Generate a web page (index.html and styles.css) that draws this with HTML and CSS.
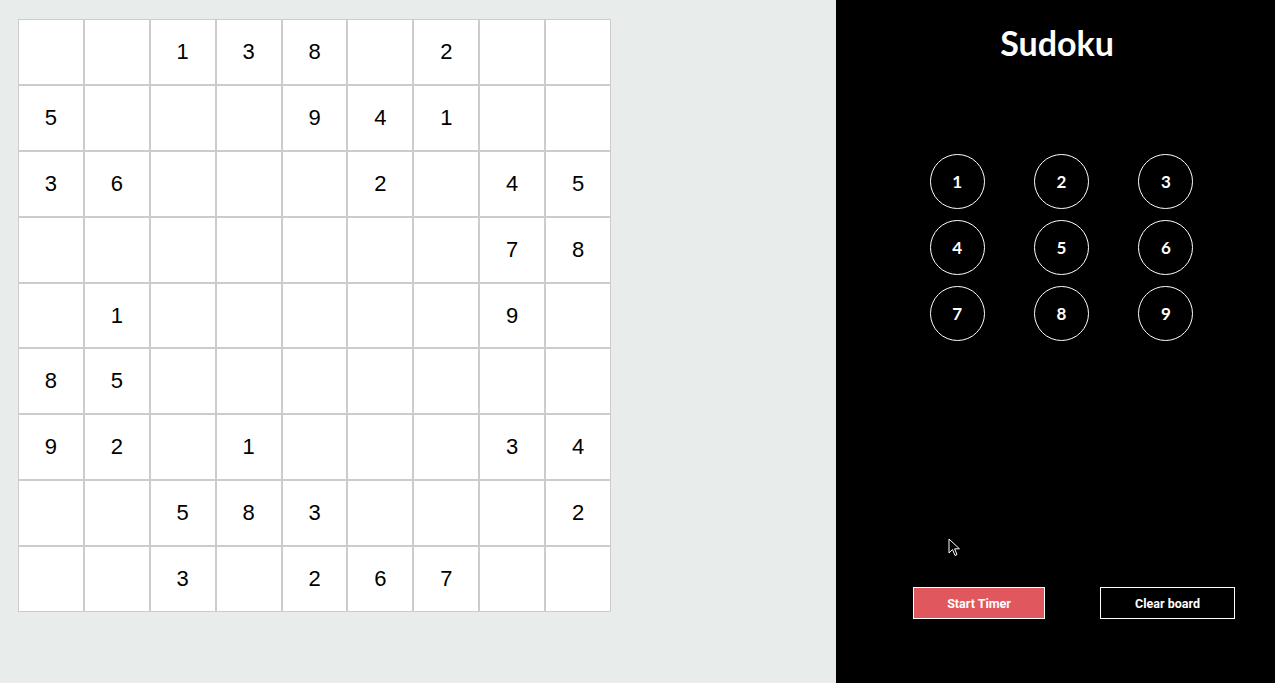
FILE: index.html
```html
<!DOCTYPE html>
<html lang="en">
<head>
    <meta charset="UTF-8">
    <meta name="viewport" content="width=device-width, initial-scale=1.0">
    <title>Sudoku</title>
    <link rel="stylesheet" href="styles.css">
</head>
<body>
    <div class="page">
        <div class="left">
            <div class="board" id="board"></div>
        </div>
        <div class="panel">
            <h1>Sudoku</h1>
            <div class="keypad">
                <button class="key">1</button>
                <button class="key">2</button>
                <button class="key">3</button>
                <button class="key">4</button>
                <button class="key">5</button>
                <button class="key">6</button>
                <button class="key">7</button>
                <button class="key">8</button>
                <button class="key">9</button>
            </div>
            <div class="actions">
                <button class="btn start">Start Timer</button>
                <button class="btn clear">Clear board</button>
            </div>
            <svg class="cursor" width="13" height="19" viewBox="0 0 13 19">
                <path d="M1 1 L1 15 L4.5 11.5 L7 17.5 L9 16.6 L6.6 10.8 L11.4 10.8 Z" fill="#000" stroke="#fff" stroke-width="1"/>
            </svg>
        </div>
    </div>
    <script>
        const puzzle = [
            "  138 2  ",
            "5   941  ",
            "36   2 45",
            "       78",
            " 1     9 ",
            "85       ",
            "92 1   34",
            "  583   2",
            "  3 267  "
        ];
        let board = document.querySelector("#board");
        for (let row of puzzle) {
            for (let ch of row) {
                let cell = document.createElement("div");
                cell.className = "cell";
                cell.innerText = ch === " " ? "" : ch;
                board.appendChild(cell);
            }
        }
    </script>
</body>
</html>
```
FILE: styles.css
```css
* {
    margin: 0;
    padding: 0;
    box-sizing: border-box;
}

body {
    background-color: #e8eceb;
    font-family: "Liberation Sans", Arial, sans-serif;
}

.page {
    display: grid;
    grid-template-columns: 836px 1fr;
    height: 683px;
}

.left {
    padding: 19px 0 0 18px;
}

.board {
    display: grid;
    grid-template-columns: repeat(9, 65.9px);
    grid-auto-rows: 65.9px;
    width: max-content;
}

.cell {
    border: 1px solid #cccccc;
    background-color: white;
    display: flex;
    justify-content: center;
    align-items: center;
    font-size: 22px;
    color: black;
}

.panel {
    position: relative;
    background-color: black;
    color: white;
    padding-top: 23px;
    font-family: Lato, sans-serif;
}

.panel h1 {
    text-align: center;
    font-size: 34px;
    font-weight: 700;
    line-height: 40px;
    padding-left: 3px;
}

.keypad {
    margin-top: 91px;
    padding: 0 57px 0 69px;
    display: grid;
    grid-template-columns: repeat(3, 1fr);
    row-gap: 11px;
    justify-items: center;
}

.key {
    width: 55px;
    height: 55px;
    border-radius: 50%;
    border: 1px solid white;
    background-color: black;
    color: white;
    font-family: Lato, sans-serif;
    font-weight: 700;
    font-size: 17px;
}

.actions {
    margin-top: 246px;
    padding-left: 77px;
    display: flex;
    gap: 55px;
}

.btn {
    height: 32px;
    border: 1px solid white;
    color: white;
    font-family: Roboto, sans-serif;
    font-weight: 700;
    font-size: 12.5px;
}

.start {
    width: 132px;
    background-color: #e0585d;
}

.clear {
    width: 135px;
    background-color: black;
}

.cursor {
    position: absolute;
    left: 112px;
    top: 538px;
}
```
